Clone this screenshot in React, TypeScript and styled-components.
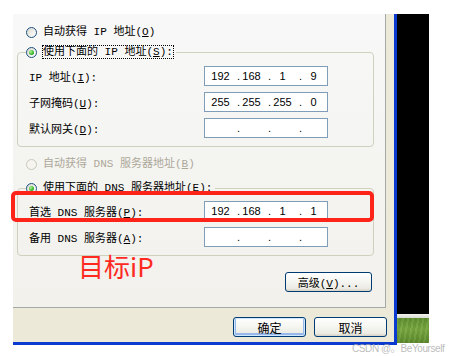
import React from 'react';
import styled, { createGlobalStyle, css } from 'styled-components';

const GlobalStyle = createGlobalStyle`
  html, body {
    margin: 0;
    padding: 0;
    background: #fff;
  }
`;

const Screen = styled.div`
  position: relative;
  box-sizing: border-box;
  width: 449px;
  height: 356px;
  overflow: hidden;
  display: flex;
  align-items: flex-start;
  padding: 14px 0 0 13px;
  background: #fff;
  font-family: "Liberation Mono", "Noto Sans CJK SC", monospace;
  font-size: 11px;
  color: #000;
`;

const Dialog = styled.div`
  box-sizing: border-box;
  width: 384px;
  height: 331px;
  display: flex;
  flex-direction: column;
  background: #ece9d8;
  border-right: 3px solid #0b3ad0;
  border-bottom: 3px solid #0b3ad0;
`;

const TabPage = styled.div`
  box-sizing: border-box;
  width: 373px;
  height: 294px;
  display: flex;
  flex-direction: column;
  padding: 10px 11px 0 4px;
  background: linear-gradient(180deg, #f8f8f8 0%, #f4f4f1 50%, #f2f1ec 100%);
  border-right: 1px solid #a3a9a6;
  border-bottom: 1px solid #a3a9a6;
`;

const OptionRow = styled.div<{ $gap?: number }>`
  display: flex;
  align-items: center;
  height: 16px;
  padding-left: 9px;
  margin-top: ${(p) => p.$gap ?? 0}px;
`;

const Radio = styled.span<{ $checked?: boolean; $disabled?: boolean }>`
  position: relative;
  box-sizing: border-box;
  flex: 0 0 auto;
  width: 11px;
  height: 11px;
  margin-right: 6px;
  border-radius: 50%;
  border: 1px solid ${(p) => (p.$disabled ? '#cac8bb' : '#1c5180')};
  background: ${(p) =>
    p.$disabled
      ? '#f5f4ef'
      : 'linear-gradient(135deg, #d6d6cf 0%, #f0f0ec 55%, #ffffff 100%)'};
  ${(p) =>
    p.$checked &&
    css`
      &::after {
        content: '';
        position: absolute;
        left: 2px;
        top: 2px;
        width: 5px;
        height: 5px;
        border-radius: 50%;
        background: radial-gradient(circle at 35% 35%, #b6f29a 0%, #3dba2d 55%, #1f8a1f 100%);
      }
    `}
`;

const OptionText = styled.span<{ $disabled?: boolean; $focused?: boolean }>`
  white-space: nowrap;
  line-height: 12px;
  color: ${(p) => (p.$disabled ? '#aca899' : '#000')};
  outline: ${(p) => (p.$focused ? '1px dotted #000' : 'none')};
  outline-offset: 0;
`;

const Group = styled.fieldset<{ $gap: number }>`
  box-sizing: border-box;
  margin: ${(p) => p.$gap}px 0 0 0;
  padding: 0 0 8px 0;
  border: 1px solid #d0d0bf;
  border-radius: 4px;
  min-width: 0;
`;

const Caption = styled.legend`
  display: flex;
  align-items: center;
  height: 16px;
  margin-left: 8px;
  padding: 0 3px 0 0;
`;

const FieldList = styled.div<{ $gap: number }>`
  display: flex;
  flex-direction: column;
  gap: 6px;
  margin-top: ${(p) => p.$gap}px;
`;

const FieldRow = styled.div`
  position: relative;
  display: flex;
  align-items: center;
  padding-left: 11px;
`;

const FieldLabel = styled.span`
  flex: 0 0 175px;
  white-space: nowrap;
`;

const IpBox = styled.div`
  box-sizing: border-box;
  display: flex;
  width: 124px;
  height: 20px;
  background: #fff;
  border: 1px solid #7f9db9;
`;

const Octet = styled.span<{ $first?: boolean }>`
  position: relative;
  flex: 0 0 31px;
  text-align: center;
  line-height: 18px;
  font-family: "Liberation Sans Narrow", "Liberation Sans", sans-serif;
  font-size: 11px;
  &::before {
    content: '${(p) => (p.$first ? '' : '.')}';
    position: absolute;
    left: 1px;
    top: 0;
  }
`;

const Highlight = styled.div`
  position: absolute;
  left: -7px;
  top: -10px;
  right: -1px;
  bottom: -1px;
  border: 4px solid #ff2419;
  border-radius: 5px;
  pointer-events: none;
`;

const BottomRow = styled.div`
  display: flex;
  justify-content: space-between;
  align-items: flex-start;
  margin-top: -3px;
`;

const Annotation = styled.span`
  margin-left: 61px;
  font-family: "Noto Sans CJK SC", sans-serif;
  font-size: 26px;
  line-height: 26px;
  color: #ff2a1f;
`;

const XpButton = styled.button<{ $width: number; $default?: boolean }>`
  box-sizing: border-box;
  width: ${(p) => p.$width}px;
  height: 20px;
  padding: 0;
  border: 1px solid #003c74;
  border-radius: 3px;
  background: linear-gradient(180deg, #ffffff 0%, #f6f6f2 45%, #ecebe4 85%, #d6d0c5 100%);
  font-family: "Liberation Mono", "Noto Sans CJK SC", monospace;
  font-size: 11px;
  color: #000;
  ${(p) =>
    p.$default &&
    css`
      box-shadow: inset 0 0 0 1px #cee7ff, inset 0 -1px 0 2px #98b8ea;
    `}
`;

const AdvancedButton = styled(XpButton)`
  margin-top: 19px;
  margin-right: 2px;
`;

const Footer = styled.div`
  flex: 1;
  display: flex;
  justify-content: flex-end;
  gap: 8px;
  padding: 9px 7px 0 0;
`;

const BigLabel = styled.span`
  font-family: "Noto Sans CJK SC", sans-serif;
  font-size: 12px;
`;

const Desktop = styled.div`
  display: flex;
  flex-direction: column;
  width: 32px;
  height: 329px;
`;

const DesktopDark = styled.div`
  height: 300px;
  background: #000;
`;

const DesktopEdge = styled.div`
  height: 4px;
  background: linear-gradient(180deg, #f2f2ee, #d8dad2);
`;

const Grass = styled.div`
  flex: 1;
  background:
    repeating-linear-gradient(100deg, rgba(255, 255, 255, 0.06) 0 2px, rgba(0, 0, 0, 0.05) 2px 5px),
    linear-gradient(180deg, #5f8f2f 0%, #78a83f 45%, #5d8a2c 100%);
`;

const Watermark = styled.span`
  position: absolute;
  left: 352px;
  top: 340px;
  font-family: "Liberation Sans", "Noto Sans CJK SC", sans-serif;
  font-size: 10px;
  letter-spacing: -0.4px;
  color: rgba(170, 170, 170, 0.8);
  white-space: nowrap;
`;

function IpField({ value }: { value?: string[] }) {
  const parts = value ?? ['', '', '', ''];
  return (
    <IpBox>
      {parts.map((part, i) => (
        <Octet key={i} $first={i === 0}>
          {part}
        </Octet>
      ))}
    </IpBox>
  );
}

function App() {
  return (
    <Screen>
      <GlobalStyle />
      <Dialog>
        <TabPage>
          <OptionRow>
            <Radio />
            <OptionText>自动获得 IP 地址(<u>O</u>)</OptionText>
          </OptionRow>

          <Group $gap={4}>
            <Caption>
              <Radio $checked />
              <OptionText $focused>使用下面的 IP 地址(<u>S</u>):</OptionText>
            </Caption>
            <FieldList $gap={6}>
              <FieldRow>
                <FieldLabel>IP 地址(<u>I</u>):</FieldLabel>
                <IpField value={['192', '168', '1', '9']} />
              </FieldRow>
              <FieldRow>
                <FieldLabel>子网掩码(<u>U</u>):</FieldLabel>
                <IpField value={['255', '255', '255', '0']} />
              </FieldRow>
              <FieldRow>
                <FieldLabel>默认网关(<u>D</u>):</FieldLabel>
                <IpField />
              </FieldRow>
            </FieldList>
          </Group>

          <OptionRow $gap={9}>
            <Radio $disabled />
            <OptionText $disabled>自动获得 DNS 服务器地址(<u>B</u>)</OptionText>
          </OptionRow>

          <Group $gap={8}>
            <Caption>
              <Radio $checked />
              <OptionText>使用下面的 DNS 服务器地址(<u>E</u>):</OptionText>
            </Caption>
            <FieldList $gap={5}>
              <FieldRow>
                <FieldLabel>首选 DNS 服务器(<u>P</u>):</FieldLabel>
                <IpField value={['192', '168', '1', '1']} />
                <Highlight />
              </FieldRow>
              <FieldRow>
                <FieldLabel>备用 DNS 服务器(<u>A</u>):</FieldLabel>
                <IpField />
              </FieldRow>
            </FieldList>
          </Group>

          <BottomRow>
            <Annotation>目标iP</Annotation>
            <AdvancedButton $width={87}>
              高级(<u>V</u>)...
            </AdvancedButton>
          </BottomRow>
        </TabPage>

        <Footer>
          <XpButton $width={73} $default>
            <BigLabel>确定</BigLabel>
          </XpButton>
          <XpButton $width={73}>
            <BigLabel>取消</BigLabel>
          </XpButton>
        </Footer>
      </Dialog>

      <Desktop>
        <DesktopDark />
        <DesktopEdge />
        <Grass />
      </Desktop>

      <Watermark>CSDN @。BeYourself</Watermark>
    </Screen>
  );
}

export default App;
